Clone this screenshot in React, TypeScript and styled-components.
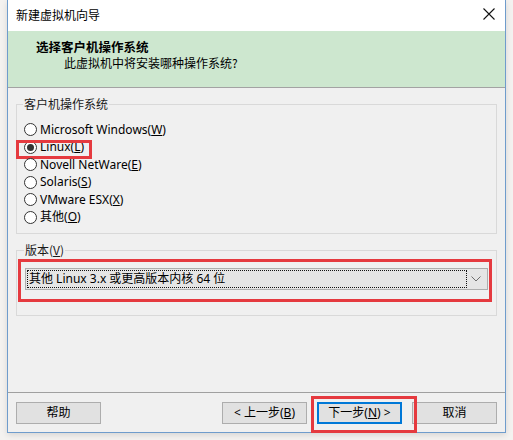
import React, { useState } from "react";
import styled, { createGlobalStyle } from "styled-components";

const GlobalStyle = createGlobalStyle`
  html, body {
    margin: 0;
    padding: 0;
    background: #f4f2f0;
  }
  body {
    font-family: "Noto Sans", "Noto Sans CJK SC", sans-serif;
    font-size: 12px;
    color: #000;
  }
`;

const osList = [
  { label: "Microsoft Windows", key: "W" },
  { label: "Linux", key: "L" },
  { label: "Novell NetWare", key: "E" },
  { label: "Solaris", key: "S" },
  { label: "VMware ESX", key: "X" },
  { label: "其他", key: "O" },
];

/**
 * New VM wizard - guest OS page
 */
const App = () => {
  // selected guest os
  const [selected, setSelected] = useState<string>("L");

  return (
    <>
      <GlobalStyle />
      <StyledPage>
        <StyledWindow>
          {/* Start title bar */}
          <StyledTitleBar>
            <StyledTitle>新建虚拟机向导</StyledTitle>
            <StyledClose>
              <svg width="12" height="12" viewBox="0 0 12 12">
                <path d="M0.5 0.5 L11.5 11.5 M11.5 0.5 L0.5 11.5" stroke="#111" strokeWidth="1.1" />
              </svg>
            </StyledClose>
          </StyledTitleBar>
          {/* End title bar */}

          <StyledHeader>
            <StyledHeaderTitle>选择客户机操作系统</StyledHeaderTitle>
            <StyledHeaderSub>此虚拟机中将安装哪种操作系统?</StyledHeaderSub>
          </StyledHeader>

          <StyledBody>
            <StyledGroup>
              <StyledLegend>客户机操作系统</StyledLegend>
              <StyledRadioList>
                {osList.map((os) => (
                  <StyledRadioRow key={os.key} onClick={() => setSelected(os.key)}>
                    <StyledRadio checked={selected === os.key} />
                    <span>
                      {os.label}(<u>{os.key}</u>)
                    </span>
                    {os.key === "L" && <StyledLinuxMark />}
                  </StyledRadioRow>
                ))}
              </StyledRadioList>
            </StyledGroup>

            <StyledVersionGroup>
              <StyledLegend>
                版本(<u>V</u>)
              </StyledLegend>
              <StyledCombo>
                <StyledComboText>其他 Linux 3.x 或更高版本内核 64 位</StyledComboText>
                <StyledComboArrow>
                  <svg width="10" height="6" viewBox="0 0 10 6">
                    <path d="M0.5 0.5 L5 5 L9.5 0.5" fill="none" stroke="#6d6d6d" strokeWidth="1" />
                  </svg>
                </StyledComboArrow>
                <StyledComboMark />
              </StyledCombo>
            </StyledVersionGroup>
          </StyledBody>

          {/* Start footer buttons */}
          <StyledFooter>
            <StyledButton>帮助</StyledButton>
            <StyledButtonGroup>
              <StyledButton>
                &lt; 上一步(<u>B</u>)
              </StyledButton>
              <StyledNextWrap>
                <StyledButton primary>
                  下一步(<u>N</u>) &gt;
                </StyledButton>
                <StyledNextMark />
              </StyledNextWrap>
              <StyledButton>取消</StyledButton>
            </StyledButtonGroup>
          </StyledFooter>
          {/* End footer buttons */}
        </StyledWindow>
      </StyledPage>
    </>
  );
};

export default App;

// ========= Start Styled Elements ==========
const StyledPage = styled.div`
  width: 513px;
  height: 440px;
  padding-left: 7px;
  box-sizing: border-box;
`;

const StyledWindow = styled.div`
  width: 499px;
  height: 433px;
  box-sizing: border-box;
  border: 1px solid #6f9ccc;
  border-top: none;
  background: #f0f0f0;
  display: flex;
  flex-direction: column;
  box-shadow: 0 2px 6px rgba(0, 0, 0, 0.12);
`;

const StyledTitleBar = styled.div`
  height: 31px;
  background: #fff;
  display: flex;
  align-items: center;
  justify-content: space-between;
  padding: 0 9px 0 8px;
  flex-shrink: 0;
`;

const StyledTitle = styled.div`
  font-family: "Noto Sans CJK SC", sans-serif;
  font-size: 12px;
  line-height: 16px;
  margin-top: -2px;
  color: #000;
`;

const StyledClose = styled.div`
  width: 14px;
  height: 14px;
  display: flex;
  align-items: center;
  justify-content: center;
  margin-top: -3px;
`;

const StyledHeader = styled.div`
  height: 57px;
  box-sizing: border-box;
  background: #cde7cf;
  border-bottom: 1px solid #a3a3a3;
  padding: 8px 0 0 28px;
  flex-shrink: 0;
`;

const StyledHeaderTitle = styled.div`
  font-family: "Noto Sans CJK SC", sans-serif;
  font-weight: bold;
  font-size: 12.5px;
  line-height: 16px;
`;

const StyledHeaderSub = styled.div`
  font-family: "Noto Sans CJK SC", sans-serif;
  font-size: 12px;
  line-height: 16px;
  padding-left: 28px;
`;

const StyledBody = styled.div`
  padding: 8px 8px 0 8px;
  display: flex;
  flex-direction: column;
  flex: 1;
`;

const StyledGroup = styled.fieldset`
  margin: 0;
  border: 1px solid #d9d9d9;
  padding: 9px 0 7px 7px;
  min-width: 0;
`;

const StyledVersionGroup = styled(StyledGroup)`
  margin-top: 8px;
  padding: 10px 8px 25px 8px;
`;

const StyledLegend = styled.legend`
  padding: 0 1px;
  margin-left: -1px;
  font-family: "Noto Sans CJK SC", sans-serif;
  font-size: 12px;
  line-height: 16px;
  color: #1a1a1a;
`;

const StyledRadioList = styled.div`
  display: flex;
  flex-direction: column;
`;

const StyledRadioRow = styled.div`
  position: relative;
  display: flex;
  align-items: center;
  height: 17.5px;
  gap: 3px;
  cursor: default;
  line-height: 16px;
  white-space: nowrap;
`;

const StyledRadio = styled.span<{ checked: boolean }>`
  width: 13px;
  height: 13px;
  box-sizing: border-box;
  border-radius: 50%;
  border: 1px solid #333;
  background: #fff;
  display: flex;
  align-items: center;
  justify-content: center;
  flex-shrink: 0;
  &::after {
    content: "";
    width: 7px;
    height: 7px;
    border-radius: 50%;
    background: #333;
    display: ${(props) => (props.checked ? "block" : "none")};
  }
`;

const StyledLinuxMark = styled.div`
  position: absolute;
  left: -8px;
  top: 1px;
  width: 76px;
  height: 19px;
  box-sizing: border-box;
  border: 3px solid #e53a3f;
  pointer-events: none;
`;

const StyledCombo = styled.div`
  position: relative;
  height: 22px;
  box-sizing: border-box;
  border: 1px solid #adadad;
  background: #e5e5e5;
  display: flex;
  align-items: center;
  padding: 0 2px 0 1px;
`;

const StyledComboText = styled.div`
  flex: 1;
  height: 18px;
  box-sizing: border-box;
  border: 1px dotted #111;
  padding-left: 1px;
  font-family: "Noto Sans", "Noto Sans CJK SC", sans-serif;
  font-size: 12px;
  line-height: 16px;
  white-space: nowrap;
`;

const StyledComboArrow = styled.div`
  width: 18px;
  display: flex;
  align-items: center;
  justify-content: center;
`;

const StyledComboMark = styled.div`
  position: absolute;
  left: -8px;
  right: -5px;
  top: -10px;
  bottom: -13px;
  border: 3px solid #e53a3f;
  pointer-events: none;
`;

const StyledFooter = styled.div`
  margin-top: auto;
  height: 40px;
  box-sizing: border-box;
  border-top: 1px solid #a0a0a0;
  padding: 9px 8px 0 8px;
  display: flex;
  justify-content: space-between;
  align-items: flex-start;
  flex-shrink: 0;
`;

const StyledButtonGroup = styled.div`
  display: flex;
  gap: 10px;
`;

const StyledNextWrap = styled.div`
  position: relative;
  display: flex;
`;

const StyledNextMark = styled.div`
  position: absolute;
  left: -6px;
  right: -15px;
  top: -6px;
  bottom: -9px;
  border: 3px solid #e53a3f;
  pointer-events: none;
`;

const StyledButton = styled.button<{ primary?: boolean }>`
  width: 85px;
  height: 22px;
  box-sizing: border-box;
  margin: 0;
  padding: 0;
  background: #e1e1e1;
  border: ${(props) => (props.primary ? "2px solid #0078d7" : "1px solid #adadad")};
  font-family: "Noto Sans", "Noto Sans CJK SC", sans-serif;
  font-size: 12px;
  line-height: 16px;
  color: #000;
  white-space: nowrap;
`;
// ========= End Styled Elements ==========
